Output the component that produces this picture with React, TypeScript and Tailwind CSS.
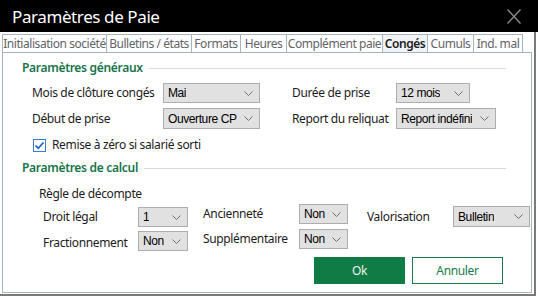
import React from "react";

const UI = { fontFamily: '"Noto Sans", "Open Sans", sans-serif' };
const SEL = { fontFamily: '"Liberation Sans", Arial, sans-serif' };

function Chevron() {
  return (
    <svg width="9" height="5" viewBox="0 0 9 5" className="shrink-0">
      <path d="M0.5 0.5 L4.5 4.5 L8.5 0.5" fill="none" stroke="#6f6f6f" strokeWidth="1" />
    </svg>
  );
}

function Select({ value, w, h = 20 }: { value: string; w: number; h?: number }) {
  return (
    <div
      className="flex items-center justify-between bg-[#e1e1e1] border border-[#adadad] pl-[4px] pr-[6px] text-[12px] tracking-[-0.4px] text-black"
      style={{ width: w, height: h, ...SEL }}
    >
      <span className="whitespace-nowrap overflow-hidden">{value}</span>
      <Chevron />
    </div>
  );
}

const tabs: { label: string; w: number; active?: boolean }[] = [
  { label: "Initialisation société", w: 105 },
  { label: "Bulletins / états", w: 85 },
  { label: "Formats", w: 49 },
  { label: "Heures", w: 46 },
  { label: "Complément paie", w: 96 },
  { label: "Congés", w: 45, active: true },
  { label: "Cumuls", w: 46 },
  { label: "Ind. mal", w: 49 },
];

function SectionHeader({ title }: { title: string }) {
  return (
    <div className="flex items-center h-[16px] pl-[19px] pr-[25px]">
      <span className="text-[12px] font-semibold tracking-[-0.3px] text-[#17744a] whitespace-nowrap leading-[16px]">{title}</span>
      <div className="flex-1 h-px bg-[#d5dadf] ml-[6px]" />
    </div>
  );
}

export default function App() {
  return (
    <div className="w-[538px] h-[298px] bg-white overflow-hidden" style={UI}>
      <div className="h-[32px] bg-black flex items-center justify-between pl-[12px] pr-[17px]">
        <span className="text-white text-[17px] tracking-[-0.4px] leading-none">Paramètres de Paie</span>
        <svg width="14" height="15" viewBox="0 0 14 15">
          <path d="M0.5 0.5 L13.5 14.5 M13.5 0.5 L0.5 14.5" stroke="#8a8a8a" strokeWidth="1.4" fill="none" />
        </svg>
      </div>
      <div className="w-[536px] h-[264px] border-r-2 border-b-2 border-[#7a7a7a] pl-[2px] pr-[2px] pt-[2px] pb-[1px] flex flex-col">
        <div className="flex h-[18px]">
          {tabs.map((t, i) => (
            <div
              key={t.label}
              className={
                "h-[18px] flex items-center justify-center border-t border-r border-[#a7b4be] text-[12px] whitespace-nowrap overflow-hidden tracking-[-0.45px] " +
                (i === 0 ? "border-l " : "") +
                (t.active ? "bg-[#f1f4f7] font-semibold text-[#1c1c1c]" : "bg-white text-[#5f6468]")
              }
              style={{ width: t.w }}
            >
              {t.label}
            </div>
          ))}
        </div>
        <div className="flex-1 border border-[#a7b4be] flex flex-col text-[12px] tracking-[-0.35px] text-[#1b1b1b] leading-[16px]">
          <div className="mt-[7px]">
            <SectionHeader title="Paramètres généraux" />
          </div>
          <div className="pl-[29px] mt-[7px] grid grid-cols-[131px_97px_136px_auto] gap-y-[5px] items-center">
            <span>Mois de clôture congés</span>
            <Select value="Mai" w={97} h={20} />
            <span className="pl-[32px]">Durée de prise</span>
            <Select value="12 mois" w={74} h={20} />
            <span>Début de prise</span>
            <Select value="Ouverture CP" w={97} h={21} />
            <span className="pl-[32px]">Report du reliquat</span>
            <Select value="Report indéfini" w={100} h={21} />
          </div>
          <div className="pl-[30px] mt-[8px] h-[16px] flex items-center">
            <div className="w-[13px] h-[13px] border border-[#3b7fd4] bg-white flex items-center justify-center">
              <svg width="11" height="11" viewBox="0 0 11 11">
                <path d="M1.5 5.5 L4.2 8.3 L9.5 2.5" fill="none" stroke="#1b65c9" strokeWidth="1.8" />
              </svg>
            </div>
            <span className="ml-[6px]">Remise à zéro si salarié sorti</span>
          </div>
          <div className="mt-[7px]">
            <SectionHeader title="Paramètres de calcul" />
          </div>
          <div className="pl-[36px] mt-[10px]">Règle de décompte</div>
          <div className="flex items-start pl-[40px]">
            <div className="mt-[5px] grid grid-cols-[95px_50px] gap-y-[4px] items-center">
              <span>Droit légal</span>
              <Select value="1" w={50} />
              <span className="pt-[3px]">Fractionnement</span>
              <Select value="Non" w={50} />
            </div>
            <div className="ml-[15px] mt-[2px] grid grid-cols-[96px_49px] gap-y-[5px] items-center">
              <span>Ancienneté</span>
              <Select value="Non" w={49} />
              <span>Supplémentaire</span>
              <Select value="Non" w={49} />
            </div>
            <div className="ml-[19px] mt-[4px] grid grid-cols-[86px_77px] items-center">
              <span className="pt-[1px]">Valorisation</span>
              <Select value="Bulletin" w={77} h={21} />
            </div>
          </div>
          <div className="flex justify-end gap-[7px] pr-[28px] mt-[6px]">
            <button className="w-[91px] h-[27px] bg-[#0f7b45] text-[#eef5f0] text-[12px]">Ok</button>
            <button className="w-[91px] h-[27px] bg-white border border-[#1a7a4b] text-[#1a7a4b] text-[12px]">Annuler</button>
          </div>
        </div>
      </div>
    </div>
  );
}
